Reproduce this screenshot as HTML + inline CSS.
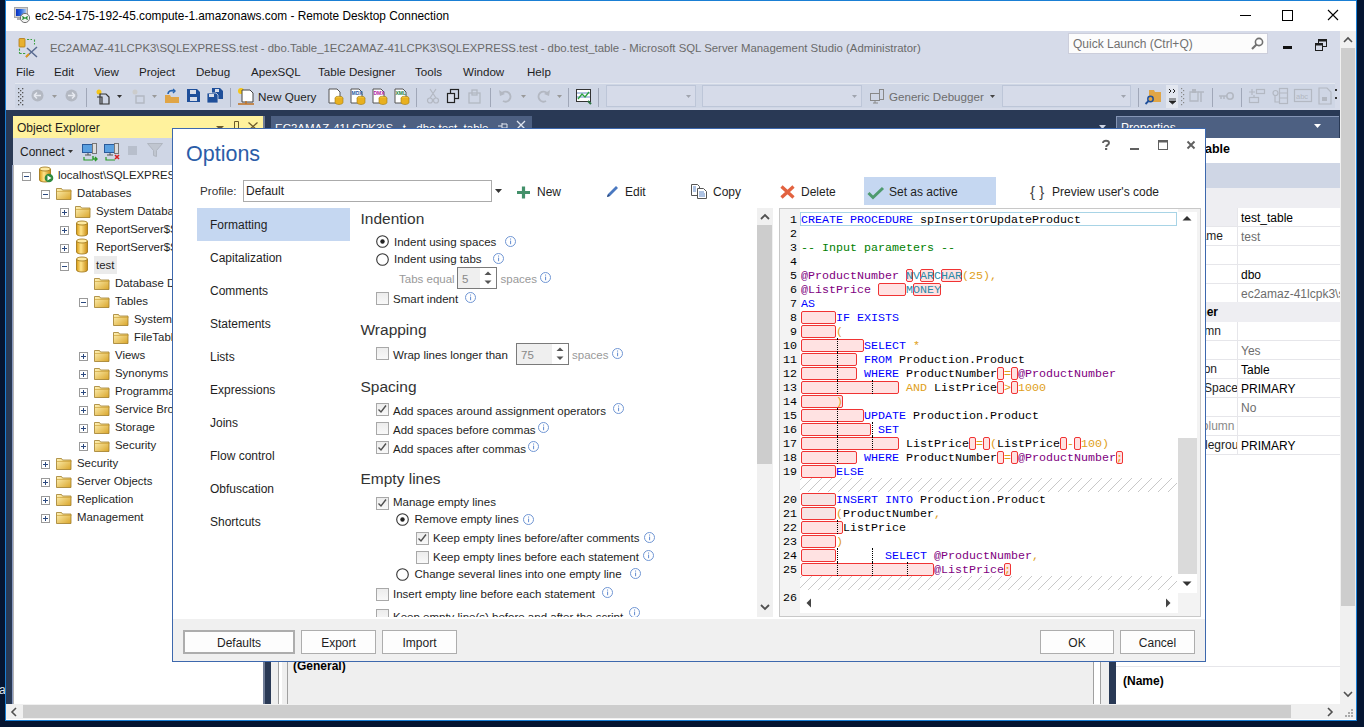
<!DOCTYPE html><html><head><meta charset="utf-8"><style>
*{margin:0;padding:0;box-sizing:border-box}
html,body{width:1364px;height:727px;overflow:hidden;background:#051531;font-family:"Liberation Sans", sans-serif;font-size:12px;color:#1e1e1e}
div{position:absolute}
.t{white-space:pre;line-height:14px}
svg{position:absolute;overflow:visible}
</style></head><body><div style="left:-1px;top:683px;width:6px;height:14px;overflow:hidden"><div class="t" style="left:0;top:0;font-size:12px;color:#e0e8f0">a</div></div><div style="left:5px;top:0px;width:1352px;height:721px;background:#fff;border:1px solid #1a7fd4"></div><div class="t" style="left:35px;top:9px;font-size:11.85px;color:#000">ec2-54-175-192-45.compute-1.amazonaws.com - Remote Desktop Connection</div><svg style="left:14px;top:7px" width="22" height="16"><defs><linearGradient id="rg" x1="0" x2="1"><stop offset="0" stop-color="#0a2fc0"/><stop offset="0.5" stop-color="#2a6ae0"/><stop offset="1" stop-color="#a8c8f0"/></linearGradient></defs><rect x="0.5" y="0.5" width="13" height="10" fill="#d0d0d0" stroke="#a8a8a8"/><rect x="2" y="2" width="10" height="7" fill="url(#rg)"/><rect x="3" y="11" width="6" height="2" fill="#b0b0b0"/><circle cx="11" cy="11" r="4.6" fill="#f4f4f4" stroke="#707070" stroke-width="1"/><path d="M8.3 9.5l2 1.5-2 1.5M13.7 9.5l-2 1.5 2 1.5" stroke="#1a8a2a" stroke-width="1.3" fill="none"/></svg><svg style="left:1240px;top:8px" width="100" height="16"><path d="M0 7.5h11" stroke="#000" stroke-width="1"/><rect x="42.5" y="2.5" width="10" height="10" fill="none" stroke="#000"/><path d="M88 2l10 10M98 2l-10 10" stroke="#000" stroke-width="1.1"/></svg><div style="left:6px;top:31px;width:1334px;height:79px;background:#d6dbe9"></div><svg style="left:18px;top:37px" width="22" height="22"><rect x="1" y="1.5" width="6" height="8.5" rx="0.8" fill="#e8b030" stroke="#b07818" stroke-width="0.8"/><path d="M9 2.5h5M16.5 2.5v5M1.5 11.5v5M1.5 16.5h6" stroke="#3aa040" stroke-width="1.1" fill="none" stroke-dasharray="2.2 1.3"/><path d="M8 20l11-10M9 11l10 9" stroke="#586a90" stroke-width="1.5"/><path d="M8 20l3-3" stroke="#e09a20" stroke-width="2"/></svg><div class="t" style="left:50px;top:41px;font-size:11.4px;color:#6a6a6a">EC2AMAZ-41LCPK3\SQLEXPRESS.test - dbo.Table_1EC2AMAZ-41LCPK3\SQLEXPRESS.test - dbo.test_table - Microsoft SQL Server Management Studio (Administrator)</div><div style="left:1068px;top:33px;width:200px;height:21px;background:#fcfcfc;border:1px solid #cccedb"></div><div class="t" style="left:1073px;top:37px;font-size:12px;color:#717171">Quick Launch (Ctrl+Q)</div><svg style="left:1250px;top:37px" width="16" height="14"><circle cx="9" cy="5" r="3.6" fill="none" stroke="#717171" stroke-width="1.6"/><path d="M6.5 7.5L2 12" stroke="#717171" stroke-width="2.2"/></svg><div style="left:1283px;top:46px;width:9px;height:3px;background:#111"></div><svg style="left:1315px;top:39px" width="12" height="12"><rect x="3.5" y="0.5" width="8" height="7" fill="none" stroke="#1e1e1e"/><rect x="3.5" y="0.5" width="8" height="2" fill="#1e1e1e"/><rect x="0.5" y="4.5" width="7" height="7" fill="#d6dbe9" stroke="#1e1e1e"/><rect x="0.5" y="4.5" width="7" height="2" fill="#1e1e1e"/></svg><div class="t" style="left:16px;top:65px;font-size:11.6px;color:#1e1e1e">File</div><div class="t" style="left:54px;top:65px;font-size:11.6px;color:#1e1e1e">Edit</div><div class="t" style="left:94px;top:65px;font-size:11.6px;color:#1e1e1e">View</div><div class="t" style="left:139px;top:65px;font-size:11.6px;color:#1e1e1e">Project</div><div class="t" style="left:196px;top:65px;font-size:11.6px;color:#1e1e1e">Debug</div><div class="t" style="left:251px;top:65px;font-size:11.6px;color:#1e1e1e">ApexSQL</div><div class="t" style="left:318px;top:65px;font-size:11.6px;color:#1e1e1e">Table Designer</div><div class="t" style="left:415px;top:65px;font-size:11.6px;color:#1e1e1e">Tools</div><div class="t" style="left:463px;top:65px;font-size:11.6px;color:#1e1e1e">Window</div><div class="t" style="left:527px;top:65px;font-size:11.6px;color:#1e1e1e">Help</div><div style="left:15px;top:83px;width:1320px;height:25px;background:#cfd6e5;border-top:1px solid #e4e8f0"></div><svg style="left:17px;top:87px" width="8" height="20"><rect x="1" y="1" width="1.3" height="1.3" fill="#555"/><rect x="3" y="3" width="1.3" height="1.3" fill="#555"/><rect x="1" y="5" width="1.3" height="1.3" fill="#555"/><rect x="3" y="7" width="1.3" height="1.3" fill="#555"/><rect x="1" y="9" width="1.3" height="1.3" fill="#555"/><rect x="3" y="11" width="1.3" height="1.3" fill="#555"/><rect x="1" y="13" width="1.3" height="1.3" fill="#555"/><rect x="3" y="15" width="1.3" height="1.3" fill="#555"/><rect x="1" y="17" width="1.3" height="1.3" fill="#555"/><rect x="5" y="1" width="1.3" height="1.3" fill="#555"/><rect x="5" y="5" width="1.3" height="1.3" fill="#555"/><rect x="5" y="9" width="1.3" height="1.3" fill="#555"/><rect x="5" y="13" width="1.3" height="1.3" fill="#555"/><rect x="5" y="17" width="1.3" height="1.3" fill="#555"/></svg><svg style="left:31px;top:89px" width="14" height="14"><circle cx="6.5" cy="6.5" r="6" fill="#b3b8c2"/><path d="M3 6.5h7M3 6.5l3-3M3 6.5l3 3" stroke="#e6e9f0" stroke-width="1.6" fill="none"/></svg><svg style="left:52px;top:95px" width="6" height="4"><path d="M0 0h5l-2.5 3z" fill="#999"/></svg><svg style="left:65px;top:89px" width="14" height="14"><circle cx="6.5" cy="6.5" r="6" fill="#b3b8c2"/><path d="M3 6.5h7M10 6.5l-3-3M10 6.5l-3 3" stroke="#e6e9f0" stroke-width="1.6" fill="none"/></svg><div style="left:86px;top:88px;width:1px;height:19px;background:#a0a7b8"></div><svg style="left:95px;top:88px" width="16" height="17"><circle cx="4" cy="4" r="2.5" fill="#f5c518"/><path d="M5 6h6l3 3v7H5z" fill="none" stroke="#333" stroke-width="1.2"/><path d="M2 9h5v7" fill="none" stroke="#333" stroke-width="1.2"/></svg><svg style="left:117px;top:95px" width="6" height="4"><path d="M0 0h5l-2.5 3z" fill="#333"/></svg><svg style="left:131px;top:88px" width="16" height="17"><circle cx="4" cy="4" r="2.5" fill="#ccc"/><path d="M5 8h8v7H5z" fill="none" stroke="#b3b8c2" stroke-width="1.4"/></svg><svg style="left:152px;top:95px" width="6" height="4"><path d="M0 0h5l-2.5 3z" fill="#999"/></svg><svg style="left:164px;top:88px" width="16" height="16"><path d="M1 7h5l1 2h8v6H1z" fill="#e0a546"/><path d="M4 6c0-3 3-4 6-3" stroke="#2563b0" stroke-width="1.6" fill="none"/><path d="M9 1l2 2-2 2" stroke="#2563b0" stroke-width="1.4" fill="none"/></svg><svg style="left:187px;top:89px" width="13" height="13"><path d="M0 0h10l3 3v10H0z" fill="#1f4f9a"/><rect x="3" y="1" width="6" height="4" fill="#d8dde9"/><rect x="3" y="8" width="7" height="4" fill="#d8dde9"/></svg><svg style="left:207px;top:88px" width="16" height="15"><path d="M5 0h8l3 3v8H5z" fill="#1f4f9a"/><rect x="8" y="1" width="4" height="3" fill="#d8dde9"/><path d="M0 5h9l2 2v8H0z" fill="#1f4f9a" stroke="#d8dde9" stroke-width="0.8"/><rect x="2" y="6" width="5" height="3" fill="#d8dde9"/></svg><div style="left:230px;top:88px;width:1px;height:19px;background:#a0a7b8"></div><svg style="left:237px;top:87px" width="18" height="19"><circle cx="4" cy="4" r="3" fill="#f5c518"/><path d="M5 3h8l3 3v9H5z" fill="#fff" stroke="#444" stroke-width="1"/><path d="M1 17h16M9 14v3" stroke="#c07020" stroke-width="1.4"/></svg><div class="t" style="left:258px;top:90px;font-size:11.7px;color:#1e1e1e">New Query</div><svg style="left:328px;top:88px" width="16" height="17"><path d="M1 1h8l3 3v11H1z" fill="#fff" stroke="#555" stroke-width="1"/><text x="1.5" y="7" font-size="5" font-family="Liberation Sans" fill="#000" font-weight="bold"></text><ellipse cx="11" cy="10" rx="4" ry="1.8" fill="#f0c030" stroke="#a07810" stroke-width="0.6"/><path d="M7 10v4.5c0 1 2 2 4 2s4-1 4-2V10" fill="#e8b020" stroke="#a07810" stroke-width="0.6"/></svg></svg><svg style="left:350px;top:88px" width="16" height="17"><path d="M1 1h8l3 3v11H1z" fill="#fff" stroke="#555" stroke-width="1"/><text x="1.5" y="7" font-size="5" font-family="Liberation Sans" fill="#2a5aa0" font-weight="bold">MDX</text><ellipse cx="11" cy="10" rx="4" ry="1.8" fill="#f0c030" stroke="#a07810" stroke-width="0.6"/><path d="M7 10v4.5c0 1 2 2 4 2s4-1 4-2V10" fill="#e8b020" stroke="#a07810" stroke-width="0.6"/></svg></svg><svg style="left:372px;top:88px" width="16" height="17"><path d="M1 1h8l3 3v11H1z" fill="#fff" stroke="#555" stroke-width="1"/><text x="1.5" y="7" font-size="5" font-family="Liberation Sans" fill="#b020a0" font-weight="bold">DMX</text><ellipse cx="11" cy="10" rx="4" ry="1.8" fill="#f0c030" stroke="#a07810" stroke-width="0.6"/><path d="M7 10v4.5c0 1 2 2 4 2s4-1 4-2V10" fill="#e8b020" stroke="#a07810" stroke-width="0.6"/></svg></svg><svg style="left:394px;top:88px" width="16" height="17"><path d="M1 1h8l3 3v11H1z" fill="#fff" stroke="#555" stroke-width="1"/><text x="1.5" y="7" font-size="5" font-family="Liberation Sans" fill="#208040" font-weight="bold">XML</text><ellipse cx="11" cy="10" rx="4" ry="1.8" fill="#f0c030" stroke="#a07810" stroke-width="0.6"/><path d="M7 10v4.5c0 1 2 2 4 2s4-1 4-2V10" fill="#e8b020" stroke="#a07810" stroke-width="0.6"/></svg></svg><div style="left:416px;top:88px;width:1px;height:19px;background:#a0a7b8"></div><svg style="left:427px;top:88px" width="12" height="16"><path d="M3 1l6 9M9 1l-6 9" stroke="#b3b8c2" stroke-width="1.2"/><circle cx="3" cy="12.5" r="2.5" fill="none" stroke="#b3b8c2" stroke-width="1.2"/><circle cx="9" cy="12.5" r="2.5" fill="none" stroke="#b3b8c2" stroke-width="1.2"/></svg><svg style="left:447px;top:89px" width="12" height="14"><rect x="3.5" y="0.5" width="8" height="9" fill="none" stroke="#222" stroke-width="1.2"/><rect x="0.5" y="4.5" width="7" height="9" fill="#d8dde9" stroke="#222" stroke-width="1.2"/></svg><svg style="left:468px;top:88px" width="13" height="16"><rect x="1" y="5" width="11" height="10" fill="none" stroke="#b3b8c2" stroke-width="1.3"/><rect x="4" y="2" width="5" height="5" fill="none" stroke="#b3b8c2" stroke-width="1.3"/></svg><div style="left:490px;top:88px;width:1px;height:19px;background:#a0a7b8"></div><svg style="left:499px;top:89px" width="14" height="14"><path d="M3 4a5 5 0 1 1 1 8" stroke="#b3b8c2" stroke-width="2" fill="none"/><path d="M0 1l1 6 5-2z" fill="#b3b8c2"/></svg><svg style="left:521px;top:95px" width="6" height="4"><path d="M0 0h5l-2.5 3z" fill="#999"/></svg><svg style="left:536px;top:89px" width="14" height="14"><path d="M11 4a5 5 0 1 0 -1 8" stroke="#b3b8c2" stroke-width="2" fill="none"/><path d="M14 1l-1 6-5-2z" fill="#b3b8c2"/></svg><svg style="left:557px;top:95px" width="6" height="4"><path d="M0 0h5l-2.5 3z" fill="#999"/></svg><div style="left:568px;top:88px;width:1px;height:19px;background:#a0a7b8"></div><svg style="left:576px;top:88px" width="17" height="16"><rect x="0.5" y="1.5" width="14" height="12" fill="#fff" stroke="#333"/><path d="M1 5h13M1 9h13" stroke="#6a8cc8"/><path d="M2 11l4-5 3 3 4-5" stroke="#2aa040" stroke-width="1.3" fill="none"/><path d="M12 13l3 3" stroke="#2a7040" stroke-width="2"/></svg><div style="left:598px;top:88px;width:1px;height:19px;background:#a0a7b8"></div><div style="left:606px;top:85px;width:90px;height:22px;background:#d6dbe9;border:1px solid #bdc6d8"></div><svg style="left:686px;top:95px" width="6" height="4"><path d="M0 0h5l-2.5 3z" fill="#a0a4ae"/></svg><div style="left:702px;top:85px;width:160px;height:22px;background:#d6dbe9;border:1px solid #bdc6d8"></div><svg style="left:852px;top:95px" width="6" height="4"><path d="M0 0h5l-2.5 3z" fill="#a0a4ae"/></svg><svg style="left:870px;top:88px" width="14" height="16"><rect x="0.5" y="5.5" width="9" height="7" fill="none" stroke="#888"/><path d="M3 15h5M5 13v2" stroke="#888"/><rect x="9.5" y="1.5" width="4" height="10" fill="none" stroke="#888"/></svg><div class="t" style="left:889px;top:90px;font-size:11.6px;color:#6d6d6d">Generic Debugger</div><svg style="left:990px;top:95px" width="6" height="4"><path d="M0 0h5l-2.5 3z" fill="#444"/></svg><div style="left:1002px;top:85px;width:129px;height:22px;background:#d6dbe9;border:1px solid #bdc6d8"></div><svg style="left:1121px;top:95px" width="6" height="4"><path d="M0 0h5l-2.5 3z" fill="#a0a4ae"/></svg><div style="left:1138px;top:88px;width:1px;height:19px;background:#a0a7b8"></div><svg style="left:1145px;top:87px" width="17" height="18"><path d="M4 3h5l1 2h6v10H4z" fill="#e0a546"/><circle cx="5.5" cy="12" r="2.7" fill="none" stroke="#1f4f9a" stroke-width="1.5"/><path d="M3.5 14l-3 3" stroke="#1f4f9a" stroke-width="1.8"/></svg><div style="left:1166px;top:85px;width:12px;height:23px;background:#e2e6ef"></div><svg style="left:1168px;top:88px" width="9" height="18"><path d="M1 1l2 2-2 2M5 1l2 2-2 2" stroke="#222" fill="none" stroke-width="1"/><path d="M1 11h7M1 13l3.5 3 3.5-3z" fill="#222" stroke="#222" stroke-width="0.8"/></svg><svg style="left:1180px;top:87px" width="6" height="20"><rect x="1" y="1" width="1.2" height="1.2" fill="#888"/><rect x="3" y="3" width="1.2" height="1.2" fill="#888"/><rect x="1" y="5" width="1.2" height="1.2" fill="#888"/><rect x="3" y="7" width="1.2" height="1.2" fill="#888"/><rect x="1" y="9" width="1.2" height="1.2" fill="#888"/><rect x="3" y="11" width="1.2" height="1.2" fill="#888"/><rect x="1" y="13" width="1.2" height="1.2" fill="#888"/><rect x="3" y="15" width="1.2" height="1.2" fill="#888"/><rect x="1" y="17" width="1.2" height="1.2" fill="#888"/></svg><svg style="left:1189px;top:88px" width="16" height="16"><path d="M1 4h8v9H1z" fill="none" stroke="#b3b8c2" stroke-width="1.3"/><path d="M3 1h4v4H3z" fill="#b3b8c2"/><path d="M9 4h6M12 4v10" stroke="#b3b8c2" stroke-width="1.5"/></svg><div style="left:1212px;top:88px;width:1px;height:19px;background:#a0a7b8"></div><svg style="left:1219px;top:92px" width="16" height="9"><circle cx="11" cy="4" r="3.2" fill="none" stroke="#b3b8c2" stroke-width="1.6"/><path d="M0 4h8M2 4v3M5 4v3" stroke="#b3b8c2" stroke-width="1.5"/></svg><div style="left:1241px;top:88px;width:1px;height:19px;background:#a0a7b8"></div><svg style="left:1249px;top:88px" width="16" height="16"><rect x="7.5" y="1.5" width="8" height="4" fill="none" stroke="#b3b8c2" stroke-width="1.2"/><rect x="0.5" y="9.5" width="9" height="5" fill="none" stroke="#b3b8c2" stroke-width="1.2"/><path d="M3 1v6M0 4h6M5 7v3" stroke="#b3b8c2" stroke-width="1.2"/></svg><svg style="left:1272px;top:88px" width="16" height="16"><circle cx="3.5" cy="5" r="2.5" fill="none" stroke="#b3b8c2" stroke-width="1.2"/><rect x="7.5" y="0.5" width="8" height="15" fill="none" stroke="#b3b8c2" stroke-width="1.2"/><path d="M8 5h7M8 10h7M3 8v6h4" stroke="#b3b8c2" stroke-width="1.2" fill="none"/></svg><svg style="left:1294px;top:89px" width="18" height="13"><rect x="0.5" y="0.5" width="17" height="12" fill="none" stroke="#b3b8c2" stroke-width="1.2"/><text x="2" y="9.5" font-size="7.5" font-family="Liberation Sans" fill="#b3b8c2">abc</text></svg><svg style="left:1318px;top:87px" width="14" height="18"><path d="M1 1h8l4 4v12H1z" fill="none" stroke="#b3b8c2" stroke-width="1.2"/><rect x="4" y="10" width="5" height="4" fill="#b3b8c2"/></svg><svg style="left:1335px;top:88px" width="3" height="14"><rect x="0" y="1" width="2" height="2" fill="#333"/><rect x="0" y="9" width="2" height="2" fill="#333"/></svg><div style="left:6px;top:110px;width:1334px;height:594px;background:#293955"></div><div style="left:13px;top:116px;width:252px;height:22px;background:#fff29d"></div><div class="t" style="left:17px;top:121px;font-size:12px;color:#1e1e1e">Object Explorer</div><svg style="left:216px;top:126px" width="8" height="5"><path d="M0 0h8l-4 4z" fill="#6b5a2a"/></svg><svg style="left:233px;top:121px" width="8" height="10"><path d="M1.5 0.5h4v7h-4zM0 7.5h7M3.5 8v3" stroke="#6b5a2a" stroke-width="1" fill="none"/></svg><svg style="left:248px;top:122px" width="10" height="9"><path d="M0.5 0.5l9 8M9.5 0.5l-9 8" stroke="#6b5a2a" stroke-width="1.2"/></svg><div style="left:13px;top:138px;width:252px;height:27px;background:#cfd6e5"></div><div class="t" style="left:20px;top:145px;font-size:12px;color:#1e1e1e">Connect</div><svg style="left:68px;top:150px" width="6" height="4"><path d="M0 0h5l-2.5 3z" fill="#333"/></svg><svg style="left:82px;top:143px" width="17" height="18"><rect x="0.5" y="1.5" width="10" height="8" fill="#5aa0e0" stroke="#2a5a9a"/><rect x="10.5" y="0.5" width="4" height="10" fill="#ddd" stroke="#777"/><path d="M3 12h6M6 10v2" stroke="#555"/><path d="M2 14v3h9" stroke="#2a9a2a" stroke-width="1.2" fill="none"/><path d="M11 13v3h4M13 14l2 2-2 2" stroke="#2a9a2a" stroke-width="1.4" fill="none"/></svg><svg style="left:104px;top:143px" width="17" height="18"><rect x="0.5" y="1.5" width="10" height="8" fill="#5aa0e0" stroke="#2a5a9a"/><rect x="10.5" y="0.5" width="4" height="10" fill="#ddd" stroke="#777"/><path d="M3 12h6M6 10v2" stroke="#555"/><path d="M2 14v3h9" stroke="#2a9a2a" stroke-width="1.2" fill="none"/><path d="M11 12l4 4M15 12l-4 4" stroke="#d82020" stroke-width="1.6"/></svg><div style="left:128px;top:146px;width:9px;height:9px;background:#b8bfcc"></div><svg style="left:147px;top:143px" width="17" height="14"><path d="M0.5 0.5h15l-6 7v6l-3-1v-5z" fill="#c0c6d0" stroke="#b0b6c0"/></svg><div style="left:12px;top:165px;width:251px;height:539px;background:#fff;border-left:1px solid #8a9abf"></div><div style="left:13px;top:165px;width:1px;height:539px;background:#b4b4b4"></div><div style="left:263px;top:116px;width:2px;height:588px;background:#6f7c96"></div><div style="left:265px;top:116px;width:6px;height:588px;background:#293955"></div><svg style="left:22px;top:172px" width="9" height="9"><rect x="0.5" y="0.5" width="8" height="8" fill="#fff" stroke="#9a9a9a"/><path d="M2 4.5h5" stroke="#2c4a80" stroke-width="1"/></svg><svg style="left:38px;top:166px" width="16" height="17"><defs><linearGradient id="dg" x1="0" x2="1"><stop offset="0" stop-color="#d99a10"/><stop offset="0.4" stop-color="#ffe48a"/><stop offset="1" stop-color="#c88a10"/></linearGradient></defs><path d="M1.5 3v11c0 1.2 2.5 2 5.5 2s5.5-.8 5.5-2V3" fill="url(#dg)" stroke="#9a7010" stroke-width="0.8"/><ellipse cx="7" cy="3" rx="5.5" ry="2" fill="#ffeaa0" stroke="#9a7010" stroke-width="0.8"/><circle cx="11" cy="12" r="4.3" fill="#2e8b3e"/><path d="M9.5 9.5v5l4-2.5z" fill="#fff"/></svg><div class="t" style="left:58px;top:168px;font-size:11.4px;color:#1e1e1e">localhost\SQLEXPRESS</div><svg style="left:41px;top:190px" width="9" height="9"><rect x="0.5" y="0.5" width="8" height="8" fill="#fff" stroke="#9a9a9a"/><path d="M2 4.5h5" stroke="#2c4a80" stroke-width="1"/></svg><svg style="left:56px;top:186px" width="16" height="14"><defs><linearGradient id="fg" x1="0" y1="0" x2="1" y2="1"><stop offset="0" stop-color="#fff3b8"/><stop offset="1" stop-color="#d9a52a"/></linearGradient></defs><path d="M0.5 2.5h5l1 1.5h8.5v9.5h-14.5z" fill="url(#fg)" stroke="#a07c28" stroke-width="0.8"/><path d="M0.5 5.5h15" stroke="#c89a30" stroke-width="0.6"/></svg><div class="t" style="left:77px;top:186px;font-size:11.4px;color:#1e1e1e">Databases</div><svg style="left:60px;top:208px" width="9" height="9"><rect x="0.5" y="0.5" width="8" height="8" fill="#fff" stroke="#9a9a9a"/><path d="M2 4.5h5" stroke="#2c4a80" stroke-width="1"/><path d="M4.5 2v5" stroke="#2c4a80" stroke-width="1"/></svg><svg style="left:75px;top:204px" width="16" height="14"><defs><linearGradient id="fg" x1="0" y1="0" x2="1" y2="1"><stop offset="0" stop-color="#fff3b8"/><stop offset="1" stop-color="#d9a52a"/></linearGradient></defs><path d="M0.5 2.5h5l1 1.5h8.5v9.5h-14.5z" fill="url(#fg)" stroke="#a07c28" stroke-width="0.8"/><path d="M0.5 5.5h15" stroke="#c89a30" stroke-width="0.6"/></svg><div class="t" style="left:96px;top:204px;font-size:11.4px;color:#1e1e1e">System Databases</div><svg style="left:60px;top:226px" width="9" height="9"><rect x="0.5" y="0.5" width="8" height="8" fill="#fff" stroke="#9a9a9a"/><path d="M2 4.5h5" stroke="#2c4a80" stroke-width="1"/><path d="M4.5 2v5" stroke="#2c4a80" stroke-width="1"/></svg><svg style="left:75px;top:220px" width="16" height="17"><defs><linearGradient id="dg" x1="0" x2="1"><stop offset="0" stop-color="#d99a10"/><stop offset="0.4" stop-color="#ffe48a"/><stop offset="1" stop-color="#c88a10"/></linearGradient></defs><path d="M1.5 3v11c0 1.2 2.5 2 5.5 2s5.5-.8 5.5-2V3" fill="url(#dg)" stroke="#9a7010" stroke-width="0.8"/><ellipse cx="7" cy="3" rx="5.5" ry="2" fill="#ffeaa0" stroke="#9a7010" stroke-width="0.8"/></svg><div class="t" style="left:96px;top:222px;font-size:11.4px;color:#1e1e1e">ReportServer$SQLEXPRESS</div><svg style="left:60px;top:244px" width="9" height="9"><rect x="0.5" y="0.5" width="8" height="8" fill="#fff" stroke="#9a9a9a"/><path d="M2 4.5h5" stroke="#2c4a80" stroke-width="1"/><path d="M4.5 2v5" stroke="#2c4a80" stroke-width="1"/></svg><svg style="left:75px;top:238px" width="16" height="17"><defs><linearGradient id="dg" x1="0" x2="1"><stop offset="0" stop-color="#d99a10"/><stop offset="0.4" stop-color="#ffe48a"/><stop offset="1" stop-color="#c88a10"/></linearGradient></defs><path d="M1.5 3v11c0 1.2 2.5 2 5.5 2s5.5-.8 5.5-2V3" fill="url(#dg)" stroke="#9a7010" stroke-width="0.8"/><ellipse cx="7" cy="3" rx="5.5" ry="2" fill="#ffeaa0" stroke="#9a7010" stroke-width="0.8"/></svg><div class="t" style="left:96px;top:240px;font-size:11.4px;color:#1e1e1e">ReportServer$SQLEXPRESSTempDB</div><svg style="left:60px;top:262px" width="9" height="9"><rect x="0.5" y="0.5" width="8" height="8" fill="#fff" stroke="#9a9a9a"/><path d="M2 4.5h5" stroke="#2c4a80" stroke-width="1"/></svg><svg style="left:75px;top:256px" width="16" height="17"><defs><linearGradient id="dg" x1="0" x2="1"><stop offset="0" stop-color="#d99a10"/><stop offset="0.4" stop-color="#ffe48a"/><stop offset="1" stop-color="#c88a10"/></linearGradient></defs><path d="M1.5 3v11c0 1.2 2.5 2 5.5 2s5.5-.8 5.5-2V3" fill="url(#dg)" stroke="#9a7010" stroke-width="0.8"/><ellipse cx="7" cy="3" rx="5.5" ry="2" fill="#ffeaa0" stroke="#9a7010" stroke-width="0.8"/></svg><div style="left:94px;top:256px;width:23px;height:18px;background:#ebebeb"></div><div class="t" style="left:96px;top:258px;font-size:11.4px;color:#1e1e1e">test</div><svg style="left:94px;top:276px" width="16" height="14"><defs><linearGradient id="fg" x1="0" y1="0" x2="1" y2="1"><stop offset="0" stop-color="#fff3b8"/><stop offset="1" stop-color="#d9a52a"/></linearGradient></defs><path d="M0.5 2.5h5l1 1.5h8.5v9.5h-14.5z" fill="url(#fg)" stroke="#a07c28" stroke-width="0.8"/><path d="M0.5 5.5h15" stroke="#c89a30" stroke-width="0.6"/></svg><div class="t" style="left:115px;top:276px;font-size:11.4px;color:#1e1e1e">Database Diagrams</div><svg style="left:79px;top:298px" width="9" height="9"><rect x="0.5" y="0.5" width="8" height="8" fill="#fff" stroke="#9a9a9a"/><path d="M2 4.5h5" stroke="#2c4a80" stroke-width="1"/></svg><svg style="left:94px;top:294px" width="16" height="14"><defs><linearGradient id="fg" x1="0" y1="0" x2="1" y2="1"><stop offset="0" stop-color="#fff3b8"/><stop offset="1" stop-color="#d9a52a"/></linearGradient></defs><path d="M0.5 2.5h5l1 1.5h8.5v9.5h-14.5z" fill="url(#fg)" stroke="#a07c28" stroke-width="0.8"/><path d="M0.5 5.5h15" stroke="#c89a30" stroke-width="0.6"/></svg><div class="t" style="left:115px;top:294px;font-size:11.4px;color:#1e1e1e">Tables</div><svg style="left:113px;top:312px" width="16" height="14"><defs><linearGradient id="fg" x1="0" y1="0" x2="1" y2="1"><stop offset="0" stop-color="#fff3b8"/><stop offset="1" stop-color="#d9a52a"/></linearGradient></defs><path d="M0.5 2.5h5l1 1.5h8.5v9.5h-14.5z" fill="url(#fg)" stroke="#a07c28" stroke-width="0.8"/><path d="M0.5 5.5h15" stroke="#c89a30" stroke-width="0.6"/></svg><div class="t" style="left:134px;top:312px;font-size:11.4px;color:#1e1e1e">System Tables</div><svg style="left:113px;top:330px" width="16" height="14"><defs><linearGradient id="fg" x1="0" y1="0" x2="1" y2="1"><stop offset="0" stop-color="#fff3b8"/><stop offset="1" stop-color="#d9a52a"/></linearGradient></defs><path d="M0.5 2.5h5l1 1.5h8.5v9.5h-14.5z" fill="url(#fg)" stroke="#a07c28" stroke-width="0.8"/><path d="M0.5 5.5h15" stroke="#c89a30" stroke-width="0.6"/></svg><div class="t" style="left:134px;top:330px;font-size:11.4px;color:#1e1e1e">FileTables</div><svg style="left:79px;top:352px" width="9" height="9"><rect x="0.5" y="0.5" width="8" height="8" fill="#fff" stroke="#9a9a9a"/><path d="M2 4.5h5" stroke="#2c4a80" stroke-width="1"/><path d="M4.5 2v5" stroke="#2c4a80" stroke-width="1"/></svg><svg style="left:94px;top:348px" width="16" height="14"><defs><linearGradient id="fg" x1="0" y1="0" x2="1" y2="1"><stop offset="0" stop-color="#fff3b8"/><stop offset="1" stop-color="#d9a52a"/></linearGradient></defs><path d="M0.5 2.5h5l1 1.5h8.5v9.5h-14.5z" fill="url(#fg)" stroke="#a07c28" stroke-width="0.8"/><path d="M0.5 5.5h15" stroke="#c89a30" stroke-width="0.6"/></svg><div class="t" style="left:115px;top:348px;font-size:11.4px;color:#1e1e1e">Views</div><svg style="left:79px;top:370px" width="9" height="9"><rect x="0.5" y="0.5" width="8" height="8" fill="#fff" stroke="#9a9a9a"/><path d="M2 4.5h5" stroke="#2c4a80" stroke-width="1"/><path d="M4.5 2v5" stroke="#2c4a80" stroke-width="1"/></svg><svg style="left:94px;top:366px" width="16" height="14"><defs><linearGradient id="fg" x1="0" y1="0" x2="1" y2="1"><stop offset="0" stop-color="#fff3b8"/><stop offset="1" stop-color="#d9a52a"/></linearGradient></defs><path d="M0.5 2.5h5l1 1.5h8.5v9.5h-14.5z" fill="url(#fg)" stroke="#a07c28" stroke-width="0.8"/><path d="M0.5 5.5h15" stroke="#c89a30" stroke-width="0.6"/></svg><div class="t" style="left:115px;top:366px;font-size:11.4px;color:#1e1e1e">Synonyms</div><svg style="left:79px;top:388px" width="9" height="9"><rect x="0.5" y="0.5" width="8" height="8" fill="#fff" stroke="#9a9a9a"/><path d="M2 4.5h5" stroke="#2c4a80" stroke-width="1"/><path d="M4.5 2v5" stroke="#2c4a80" stroke-width="1"/></svg><svg style="left:94px;top:384px" width="16" height="14"><defs><linearGradient id="fg" x1="0" y1="0" x2="1" y2="1"><stop offset="0" stop-color="#fff3b8"/><stop offset="1" stop-color="#d9a52a"/></linearGradient></defs><path d="M0.5 2.5h5l1 1.5h8.5v9.5h-14.5z" fill="url(#fg)" stroke="#a07c28" stroke-width="0.8"/><path d="M0.5 5.5h15" stroke="#c89a30" stroke-width="0.6"/></svg><div class="t" style="left:115px;top:384px;font-size:11.4px;color:#1e1e1e">Programmability</div><svg style="left:79px;top:406px" width="9" height="9"><rect x="0.5" y="0.5" width="8" height="8" fill="#fff" stroke="#9a9a9a"/><path d="M2 4.5h5" stroke="#2c4a80" stroke-width="1"/><path d="M4.5 2v5" stroke="#2c4a80" stroke-width="1"/></svg><svg style="left:94px;top:402px" width="16" height="14"><defs><linearGradient id="fg" x1="0" y1="0" x2="1" y2="1"><stop offset="0" stop-color="#fff3b8"/><stop offset="1" stop-color="#d9a52a"/></linearGradient></defs><path d="M0.5 2.5h5l1 1.5h8.5v9.5h-14.5z" fill="url(#fg)" stroke="#a07c28" stroke-width="0.8"/><path d="M0.5 5.5h15" stroke="#c89a30" stroke-width="0.6"/></svg><div class="t" style="left:115px;top:402px;font-size:11.4px;color:#1e1e1e">Service Broker</div><svg style="left:79px;top:424px" width="9" height="9"><rect x="0.5" y="0.5" width="8" height="8" fill="#fff" stroke="#9a9a9a"/><path d="M2 4.5h5" stroke="#2c4a80" stroke-width="1"/><path d="M4.5 2v5" stroke="#2c4a80" stroke-width="1"/></svg><svg style="left:94px;top:420px" width="16" height="14"><defs><linearGradient id="fg" x1="0" y1="0" x2="1" y2="1"><stop offset="0" stop-color="#fff3b8"/><stop offset="1" stop-color="#d9a52a"/></linearGradient></defs><path d="M0.5 2.5h5l1 1.5h8.5v9.5h-14.5z" fill="url(#fg)" stroke="#a07c28" stroke-width="0.8"/><path d="M0.5 5.5h15" stroke="#c89a30" stroke-width="0.6"/></svg><div class="t" style="left:115px;top:420px;font-size:11.4px;color:#1e1e1e">Storage</div><svg style="left:79px;top:442px" width="9" height="9"><rect x="0.5" y="0.5" width="8" height="8" fill="#fff" stroke="#9a9a9a"/><path d="M2 4.5h5" stroke="#2c4a80" stroke-width="1"/><path d="M4.5 2v5" stroke="#2c4a80" stroke-width="1"/></svg><svg style="left:94px;top:438px" width="16" height="14"><defs><linearGradient id="fg" x1="0" y1="0" x2="1" y2="1"><stop offset="0" stop-color="#fff3b8"/><stop offset="1" stop-color="#d9a52a"/></linearGradient></defs><path d="M0.5 2.5h5l1 1.5h8.5v9.5h-14.5z" fill="url(#fg)" stroke="#a07c28" stroke-width="0.8"/><path d="M0.5 5.5h15" stroke="#c89a30" stroke-width="0.6"/></svg><div class="t" style="left:115px;top:438px;font-size:11.4px;color:#1e1e1e">Security</div><svg style="left:41px;top:460px" width="9" height="9"><rect x="0.5" y="0.5" width="8" height="8" fill="#fff" stroke="#9a9a9a"/><path d="M2 4.5h5" stroke="#2c4a80" stroke-width="1"/><path d="M4.5 2v5" stroke="#2c4a80" stroke-width="1"/></svg><svg style="left:56px;top:456px" width="16" height="14"><defs><linearGradient id="fg" x1="0" y1="0" x2="1" y2="1"><stop offset="0" stop-color="#fff3b8"/><stop offset="1" stop-color="#d9a52a"/></linearGradient></defs><path d="M0.5 2.5h5l1 1.5h8.5v9.5h-14.5z" fill="url(#fg)" stroke="#a07c28" stroke-width="0.8"/><path d="M0.5 5.5h15" stroke="#c89a30" stroke-width="0.6"/></svg><div class="t" style="left:77px;top:456px;font-size:11.4px;color:#1e1e1e">Security</div><svg style="left:41px;top:478px" width="9" height="9"><rect x="0.5" y="0.5" width="8" height="8" fill="#fff" stroke="#9a9a9a"/><path d="M2 4.5h5" stroke="#2c4a80" stroke-width="1"/><path d="M4.5 2v5" stroke="#2c4a80" stroke-width="1"/></svg><svg style="left:56px;top:474px" width="16" height="14"><defs><linearGradient id="fg" x1="0" y1="0" x2="1" y2="1"><stop offset="0" stop-color="#fff3b8"/><stop offset="1" stop-color="#d9a52a"/></linearGradient></defs><path d="M0.5 2.5h5l1 1.5h8.5v9.5h-14.5z" fill="url(#fg)" stroke="#a07c28" stroke-width="0.8"/><path d="M0.5 5.5h15" stroke="#c89a30" stroke-width="0.6"/></svg><div class="t" style="left:77px;top:474px;font-size:11.4px;color:#1e1e1e">Server Objects</div><svg style="left:41px;top:496px" width="9" height="9"><rect x="0.5" y="0.5" width="8" height="8" fill="#fff" stroke="#9a9a9a"/><path d="M2 4.5h5" stroke="#2c4a80" stroke-width="1"/><path d="M4.5 2v5" stroke="#2c4a80" stroke-width="1"/></svg><svg style="left:56px;top:492px" width="16" height="14"><defs><linearGradient id="fg" x1="0" y1="0" x2="1" y2="1"><stop offset="0" stop-color="#fff3b8"/><stop offset="1" stop-color="#d9a52a"/></linearGradient></defs><path d="M0.5 2.5h5l1 1.5h8.5v9.5h-14.5z" fill="url(#fg)" stroke="#a07c28" stroke-width="0.8"/><path d="M0.5 5.5h15" stroke="#c89a30" stroke-width="0.6"/></svg><div class="t" style="left:77px;top:492px;font-size:11.4px;color:#1e1e1e">Replication</div><svg style="left:41px;top:514px" width="9" height="9"><rect x="0.5" y="0.5" width="8" height="8" fill="#fff" stroke="#9a9a9a"/><path d="M2 4.5h5" stroke="#2c4a80" stroke-width="1"/><path d="M4.5 2v5" stroke="#2c4a80" stroke-width="1"/></svg><svg style="left:56px;top:510px" width="16" height="14"><defs><linearGradient id="fg" x1="0" y1="0" x2="1" y2="1"><stop offset="0" stop-color="#fff3b8"/><stop offset="1" stop-color="#d9a52a"/></linearGradient></defs><path d="M0.5 2.5h5l1 1.5h8.5v9.5h-14.5z" fill="url(#fg)" stroke="#a07c28" stroke-width="0.8"/><path d="M0.5 5.5h15" stroke="#c89a30" stroke-width="0.6"/></svg><div class="t" style="left:77px;top:510px;font-size:11.4px;color:#1e1e1e">Management</div><div style="left:271px;top:116px;width:261px;height:22px;background:#4d6082"></div><div class="t" style="left:275px;top:121px;font-size:11.5px;color:#fff">EC2AMAZ-41LCPK3\S...t - dbo.test_table</div><svg style="left:498px;top:122px" width="10" height="8"><path d="M0 4h4M4 1v6M4 2h5v4H4" stroke="#e0e6f0" fill="none"/></svg><svg style="left:516px;top:120px" width="10" height="10"><path d="M1 1l8 8M9 1l-8 8" stroke="#e0e6f0" stroke-width="1.3"/></svg><div style="left:271px;top:138px;width:838px;height:566px;background:#efefef"></div><div style="left:278px;top:138px;width:1px;height:566px;background:#a0a0a0"></div><div style="left:279px;top:138px;width:3px;height:566px;background:#fff"></div><div style="left:287px;top:138px;width:1px;height:566px;background:#a0a0a0"></div><div class="t" style="left:293px;top:659px;font-size:12px;font-weight:bold;color:#000">(General)</div><div style="left:1093px;top:138px;width:1px;height:566px;background:#a0a0a0"></div><div style="left:1094px;top:138px;width:6px;height:566px;background:#fff"></div><div style="left:1100px;top:138px;width:1px;height:566px;background:#a0a0a0"></div><div style="left:1101px;top:138px;width:8px;height:566px;background:#efefef"></div><div style="left:1109px;top:116px;width:7px;height:588px;background:#293955"></div><svg style="left:1099px;top:125px" width="8" height="5"><path d="M0 0h7l-3.5 4z" fill="#cfd6e5"/></svg><div style="left:1116px;top:116px;width:223px;height:22px;background:#4d6082;border-top:1px solid #8595b5;border-left:1px solid #8595b5"></div><div class="t" style="left:1121px;top:121px;font-size:12px;color:#fff">Properties</div><svg style="left:1314px;top:124px" width="8" height="5"><path d="M0 0h7l-3.5 4z" fill="#fff"/></svg><div style="left:1116px;top:138px;width:224px;height:566px;background:#fff"></div><div class="t" style="right:134px;top:142px;font-size:12.5px;font-weight:bold;color:#000">dbo.test_table</div><div style="left:1116px;top:163px;width:224px;height:25px;background:#cfd6e5"></div><div style="left:1116px;top:188px;width:224px;height:20px;background:#eeeef2"></div><div style="left:1116px;top:208px;width:224px;height:248px;overflow:hidden"><div style="left:90px;top:0px;width:31px;height:18px;background:#eeeef2"></div><div style="left:0px;top:18px;width:224px;height:1px;background:#e6e6ea"></div><div style="left:121px;top:0px;width:1px;height:19px;background:#e6e6ea"></div><div class="t" style="left:125px;top:3.34px;font-size:12px;line-height:14px;color:#000">test_table</div><div style="left:90px;top:0px;width:31px;height:18px;overflow:hidden"><div class="t" style="right:37px;top:2px;font-size:12px;color:#1e1e1e">(Name)</div></div><div style="left:0px;top:37px;width:224px;height:1px;background:#e6e6ea"></div><div style="left:121px;top:19px;width:1px;height:19px;background:#e6e6ea"></div><div class="t" style="left:125px;top:22.34px;font-size:12px;line-height:14px;color:#6d6d6d">test</div><div style="left:90px;top:19px;width:31px;height:18px;overflow:hidden"><div class="t" style="right:14px;top:2px;font-size:12px;color:#1e1e1e">Database Name</div></div><div style="left:0px;top:56px;width:224px;height:1px;background:#e6e6ea"></div><div style="left:121px;top:38px;width:1px;height:19px;background:#e6e6ea"></div><div class="t" style="left:125px;top:41.34px;font-size:12px;line-height:14px;color:#000"></div><div style="left:90px;top:38px;width:31px;height:18px;overflow:hidden"><div class="t" style="right:37px;top:2px;font-size:12px;color:#1e1e1e">Description</div></div><div style="left:0px;top:75px;width:224px;height:1px;background:#e6e6ea"></div><div style="left:121px;top:57px;width:1px;height:19px;background:#e6e6ea"></div><div class="t" style="left:125px;top:60.34px;font-size:12px;line-height:14px;color:#000">dbo</div><div style="left:90px;top:57px;width:31px;height:18px;overflow:hidden"><div class="t" style="right:37px;top:2px;font-size:12px;color:#1e1e1e">Schema</div></div><div style="left:0px;top:94px;width:224px;height:1px;background:#e6e6ea"></div><div style="left:121px;top:76px;width:1px;height:19px;background:#e6e6ea"></div><div class="t" style="left:125px;top:79.34px;font-size:12px;line-height:14px;color:#6d6d6d">ec2amaz-41lcpk3\sqlexpress</div><div style="left:90px;top:76px;width:31px;height:18px;overflow:hidden"><div class="t" style="right:37px;top:2px;font-size:12px;color:#1e1e1e">Server Name</div></div><div style="left:0px;top:94px;width:224px;height:20px;background:#eeeef2"></div><div class="t" style="right:122px;top:97px;font-size:12px;font-weight:bold;color:#000">Table Designer</div><div style="left:0px;top:132px;width:224px;height:1px;background:#e6e6ea"></div><div style="left:121px;top:114px;width:1px;height:19px;background:#e6e6ea"></div><div class="t" style="left:125px;top:117.34px;font-size:12px;line-height:14px;color:#000"></div><div style="left:90px;top:114px;width:31px;height:18px;overflow:hidden"><div class="t" style="right:16px;top:2px;font-size:12px;color:#1e1e1e">Identity Column</div></div><div style="left:0px;top:151px;width:224px;height:1px;background:#e6e6ea"></div><div style="left:121px;top:133px;width:1px;height:19px;background:#e6e6ea"></div><div class="t" style="left:125px;top:136.34px;font-size:12px;line-height:14px;color:#6d6d6d">Yes</div><div style="left:90px;top:133px;width:31px;height:18px;overflow:hidden"><div class="t" style="right:37px;top:2px;font-size:12px;color:#1e1e1e">Indexable</div></div><div style="left:0px;top:170px;width:224px;height:1px;background:#e6e6ea"></div><div style="left:121px;top:152px;width:1px;height:19px;background:#e6e6ea"></div><div class="t" style="left:125px;top:155.34px;font-size:12px;line-height:14px;color:#000">Table</div><div style="left:90px;top:152px;width:31px;height:18px;overflow:hidden"><div class="t" style="right:20px;top:2px;font-size:12px;color:#1e1e1e">Lock Escalation</div></div><div style="left:0px;top:189px;width:224px;height:1px;background:#e6e6ea"></div><div style="left:121px;top:171px;width:1px;height:19px;background:#e6e6ea"></div><div class="t" style="left:125px;top:174.34px;font-size:12px;line-height:14px;color:#000">PRIMARY</div><div style="left:90px;top:171px;width:31px;height:18px;overflow:hidden"><div class="t" style="right:-1px;top:2px;font-size:12px;color:#1e1e1e">Regular Data Space</div></div><div style="left:0px;top:208px;width:224px;height:1px;background:#e6e6ea"></div><div style="left:121px;top:190px;width:1px;height:19px;background:#e6e6ea"></div><div class="t" style="left:125px;top:193.34px;font-size:12px;line-height:14px;color:#6d6d6d">No</div><div style="left:90px;top:190px;width:31px;height:18px;overflow:hidden"><div class="t" style="right:37px;top:2px;font-size:12px;color:#1e1e1e">Replicated</div></div><div style="left:0px;top:227px;width:224px;height:1px;background:#e6e6ea"></div><div style="left:121px;top:209px;width:1px;height:19px;background:#e6e6ea"></div><div class="t" style="left:125px;top:212.34px;font-size:12px;line-height:14px;color:#909090"></div><div style="left:90px;top:209px;width:31px;height:18px;overflow:hidden"><div class="t" style="right:2.5px;top:2px;font-size:12px;color:#8a8a8a">Row GUID Column</div></div><div style="left:0px;top:246px;width:224px;height:1px;background:#e6e6ea"></div><div style="left:121px;top:228px;width:1px;height:19px;background:#e6e6ea"></div><div class="t" style="left:125px;top:231.34px;font-size:12px;line-height:14px;color:#000">PRIMARY</div><div style="left:90px;top:228px;width:31px;height:18px;overflow:hidden"><div class="t" style="right:-8px;top:2px;font-size:12px;color:#1e1e1e">Text/Image Filegroup</div></div></div><div style="left:1116px;top:666px;width:224px;height:1px;background:#e6e6ea"></div><div class="t" style="left:1123px;top:674px;font-size:12px;font-weight:bold;color:#000">(Name)</div><div style="left:1340px;top:31px;width:16px;height:673px;background:#f0f0f0"></div><div style="left:1341px;top:48px;width:14px;height:558px;background:#cdcdcd"></div><svg style="left:1343px;top:36px" width="10" height="7"><path d="M1 6l4-4 4 4" stroke="#505050" stroke-width="1.6" fill="none"/></svg><svg style="left:1343px;top:691px" width="10" height="7"><path d="M1 1l4 4 4-4" stroke="#505050" stroke-width="1.6" fill="none"/></svg><div style="left:6px;top:704px;width:1334px;height:15px;background:#f0f0f0"></div><div style="left:23px;top:705px;width:1268px;height:13px;background:#cdcdcd"></div><svg style="left:10px;top:707px" width="7" height="10"><path d="M6 1l-4 4 4 4" stroke="#505050" stroke-width="1.6" fill="none"/></svg><svg style="left:1327px;top:707px" width="7" height="10"><path d="M1 1l4 4-4 4" stroke="#505050" stroke-width="1.6" fill="none"/></svg><div style="left:1340px;top:704px;width:16px;height:15px;background:#f0f0f0"></div><svg style="left:1344px;top:709px" width="10" height="8"><rect x="7" y="0" width="2" height="2" fill="#aaa"/><rect x="4" y="3" width="2" height="2" fill="#aaa"/><rect x="7" y="3" width="2" height="2" fill="#aaa"/><rect x="1" y="6" width="2" height="2" fill="#aaa"/><rect x="4" y="6" width="2" height="2" fill="#aaa"/><rect x="7" y="6" width="2" height="2" fill="#aaa"/></svg><div style="left:172px;top:128px;width:1034px;height:534px;background:#fff;border:1px solid #3d68ad"></div><div class="t" style="left:186px;top:146.55px;font-size:21.5px;line-height:14px;color:#2b5da8">Options</div><svg style="left:1102px;top:140px" width="8" height="10"><path d="M1 3c0-1.8 1.3-2.2 3-2.2S7 1.5 7 3c0 2-2.8 1.8-2.8 4" stroke="#606060" stroke-width="1.9" fill="none"/><rect x="3" y="8" width="2.2" height="2" fill="#606060"/></svg><div style="left:1130px;top:148px;width:9px;height:2px;background:#606060"></div><svg style="left:1158px;top:140px" width="10" height="10"><rect x="0.5" y="0.5" width="9" height="9" fill="none" stroke="#606060" stroke-width="1"/><rect x="0.5" y="0.5" width="9" height="2" fill="#606060"/></svg><svg style="left:1186px;top:140px" width="10" height="10"><path d="M1.5 1.5l7 7M8.5 1.5l-7 7" stroke="#606060" stroke-width="1.9"/></svg><div class="t" style="left:200px;top:183.65px;font-size:11.7px;line-height:14px;color:#333">Profile:</div><div style="left:243px;top:180px;width:249px;height:22px;background:#fff;border:1px solid #ababab"></div><div class="t" style="left:246px;top:183.54px;font-size:12px;line-height:14px;color:#1e1e1e">Default</div><svg style="left:495px;top:189px" width="8" height="5"><path d="M0 0h7l-3.5 4z" fill="#333"/></svg><svg style="left:516px;top:186px" width="15" height="13"><path d="M7.5 0.5v12M1 6.5h13" stroke="#43906a" stroke-width="3.2"/></svg><div class="t" style="left:537px;top:184.64px;font-size:12px;line-height:14px;color:#1e1e1e">New</div><svg style="left:605px;top:185px" width="14" height="14"><path d="M2 12l1-3 8-8 2 2-8 8z" fill="#4a78c0"/><path d="M2 12l1-3 2 2z" fill="#2a4a80"/></svg><div class="t" style="left:625px;top:184.64px;font-size:12px;line-height:14px;color:#1e1e1e">Edit</div><svg style="left:691px;top:184px" width="17" height="15"><path d="M0.5 0.5h6l2 2v9h-8z" fill="#fff" stroke="#555"/><path d="M6.5 4.5h6l3 3v7h-9z" fill="#fff" stroke="#555"/><path d="M2 3h3M2 5h3M2 7h3M8 8h5M8 10h6M8 12h6" stroke="#4a78c0" stroke-width="0.9"/></svg><div class="t" style="left:713px;top:184.64px;font-size:12px;line-height:14px;color:#1e1e1e">Copy</div><svg style="left:780px;top:185px" width="15" height="14"><path d="M1.5 1.5l12 11M13.5 1.5l-12 11" stroke="#e2623f" stroke-width="3.3"/></svg><div class="t" style="left:801px;top:184.64px;font-size:12px;line-height:14px;color:#1e1e1e">Delete</div><div style="left:864px;top:177px;width:132px;height:28px;background:#c5d7f1"></div><svg style="left:867px;top:187px" width="18" height="12"><path d="M1.5 6l4.5 4.5L16 1" stroke="#4e9a6e" stroke-width="3" fill="none"/></svg><div class="t" style="left:889px;top:184.64px;font-size:12px;line-height:14px;color:#1e1e1e">Set as active</div><div class="t" style="left:1030px;top:184.80px;font-size:15px;line-height:14px;color:#444">{ }</div><div class="t" style="left:1052px;top:184.64px;font-size:12px;line-height:14px;color:#1e1e1e">Preview user's code</div><div style="left:197px;top:208px;width:153px;height:33px;background:#c5d7f1"></div><div class="t" style="left:210px;top:217.54px;font-size:12px;line-height:14px;color:#1e1e1e">Formatting</div><div class="t" style="left:210px;top:250.54px;font-size:12px;line-height:14px;color:#1e1e1e">Capitalization</div><div class="t" style="left:210px;top:283.54px;font-size:12px;line-height:14px;color:#1e1e1e">Comments</div><div class="t" style="left:210px;top:316.54px;font-size:12px;line-height:14px;color:#1e1e1e">Statements</div><div class="t" style="left:210px;top:349.54px;font-size:12px;line-height:14px;color:#1e1e1e">Lists</div><div class="t" style="left:210px;top:382.54px;font-size:12px;line-height:14px;color:#1e1e1e">Expressions</div><div class="t" style="left:210px;top:415.54px;font-size:12px;line-height:14px;color:#1e1e1e">Joins</div><div class="t" style="left:210px;top:448.54px;font-size:12px;line-height:14px;color:#1e1e1e">Flow control</div><div class="t" style="left:210px;top:481.54px;font-size:12px;line-height:14px;color:#1e1e1e">Obfuscation</div><div class="t" style="left:210px;top:514.54px;font-size:12px;line-height:14px;color:#1e1e1e">Shortcuts</div><div style="left:355px;top:208px;width:402px;height:409px;overflow:hidden"><div class="t" style="left:5.5px;top:4.43px;font-size:15.5px;line-height:14px;color:#333">Indention</div><svg style="left:21px;top:27px" width="13" height="13"><circle cx="6.5" cy="6.5" r="5.8" fill="#fff" stroke="#333" stroke-width="1.1"/><circle cx="6.5" cy="6.5" r="2.2" fill="#222"/></svg><div class="t" style="left:39px;top:26.62px;font-size:11.5px;line-height:14px;color:#1e1e1e">Indent using spaces</div><svg style="left:150px;top:28px" width="12" height="12"><circle cx="5.5" cy="5.5" r="5" fill="none" stroke="#7096d4" stroke-width="1"/><rect x="5" y="2.5" width="1.1" height="1.1" fill="#7096d4"/><rect x="5" y="4.6" width="1.1" height="3.6" fill="#7096d4"/></svg><svg style="left:21px;top:44.5px" width="13" height="13"><circle cx="6.5" cy="6.5" r="5.8" fill="#fff" stroke="#333" stroke-width="1.1"/></svg><div class="t" style="left:39px;top:43.92px;font-size:11.5px;line-height:14px;color:#1e1e1e">Indent using tabs</div><svg style="left:138px;top:45px" width="12" height="12"><circle cx="5.5" cy="5.5" r="5" fill="none" stroke="#7096d4" stroke-width="1"/><rect x="5" y="2.5" width="1.1" height="1.1" fill="#7096d4"/><rect x="5" y="4.6" width="1.1" height="3.6" fill="#7096d4"/></svg><div class="t" style="left:44px;top:63.82px;font-size:11.5px;line-height:14px;color:#999">Tabs equal</div><div style="left:102px;top:59px;width:40px;height:22px;border:1px solid #7a7a7a;background:#fff"></div><div style="left:103px;top:60px;width:22px;height:20px;background:#efefef"></div><div class="t" style="left:107px;top:63.52px;font-size:11.5px;line-height:14px;color:#888">5</div><svg style="left:129px;top:63px" width="8" height="14"><path d="M0.5 4l3.5-3.5 3.5 3.5z" fill="#555"/><path d="M0.5 9.5l3.5 3.5 3.5-3.5z" fill="#555"/></svg><div class="t" style="left:145.5px;top:63.82px;font-size:11.5px;line-height:14px;color:#999">spaces</div><svg style="left:185px;top:64px" width="12" height="12"><circle cx="5.5" cy="5.5" r="5" fill="none" stroke="#7096d4" stroke-width="1"/><rect x="5" y="2.5" width="1.1" height="1.1" fill="#7096d4"/><rect x="5" y="4.6" width="1.1" height="3.6" fill="#7096d4"/></svg><svg style="left:21px;top:84px" width="13" height="13"><defs><linearGradient id="cbg" x1="0" y1="0" x2="0" y2="1"><stop offset="0" stop-color="#ececec"/><stop offset="1" stop-color="#f9f9f9"/></linearGradient></defs><rect x="0.5" y="0.5" width="12" height="12" fill="url(#cbg)" stroke="#a8a8a8"/></svg><div class="t" style="left:38px;top:84.42px;font-size:11.5px;line-height:14px;color:#1e1e1e">Smart indent</div><svg style="left:110px;top:84px" width="12" height="12"><circle cx="5.5" cy="5.5" r="5" fill="none" stroke="#7096d4" stroke-width="1"/><rect x="5" y="2.5" width="1.1" height="1.1" fill="#7096d4"/><rect x="5" y="4.6" width="1.1" height="3.6" fill="#7096d4"/></svg><div class="t" style="left:5.5px;top:114.83px;font-size:15.5px;line-height:14px;color:#333">Wrapping</div><svg style="left:21px;top:139px" width="13" height="13"><defs><linearGradient id="cbg" x1="0" y1="0" x2="0" y2="1"><stop offset="0" stop-color="#ececec"/><stop offset="1" stop-color="#f9f9f9"/></linearGradient></defs><rect x="0.5" y="0.5" width="12" height="12" fill="url(#cbg)" stroke="#a8a8a8"/></svg><div class="t" style="left:38px;top:139.92px;font-size:11.5px;line-height:14px;color:#1e1e1e">Wrap lines longer than</div><div style="left:161px;top:135px;width:53px;height:22px;border:1px solid #7a7a7a;background:#fff"></div><div style="left:162px;top:136px;width:35px;height:20px;background:#efefef"></div><div class="t" style="left:166px;top:139.52px;font-size:11.5px;line-height:14px;color:#888">75</div><svg style="left:201px;top:139px" width="8" height="14"><path d="M0.5 4l3.5-3.5 3.5 3.5z" fill="#555"/><path d="M0.5 9.5l3.5 3.5 3.5-3.5z" fill="#555"/></svg><div class="t" style="left:217px;top:139.92px;font-size:11.5px;line-height:14px;color:#999">spaces</div><svg style="left:257px;top:140px" width="12" height="12"><circle cx="5.5" cy="5.5" r="5" fill="none" stroke="#7096d4" stroke-width="1"/><rect x="5" y="2.5" width="1.1" height="1.1" fill="#7096d4"/><rect x="5" y="4.6" width="1.1" height="3.6" fill="#7096d4"/></svg><div class="t" style="left:5.5px;top:172.23px;font-size:15.5px;line-height:14px;color:#333">Spacing</div><svg style="left:21px;top:195px" width="13" height="13"><defs><linearGradient id="cbg" x1="0" y1="0" x2="0" y2="1"><stop offset="0" stop-color="#ececec"/><stop offset="1" stop-color="#f9f9f9"/></linearGradient></defs><rect x="0.5" y="0.5" width="12" height="12" fill="url(#cbg)" stroke="#a8a8a8"/><path d="M2.5 6.5l2.5 2.5 5-6.5" stroke="#505050" stroke-width="1.4" fill="none"/></svg><div class="t" style="left:38px;top:196.02px;font-size:11.5px;line-height:14px;color:#1e1e1e">Add spaces around assignment operators</div><svg style="left:258px;top:195px" width="12" height="12"><circle cx="5.5" cy="5.5" r="5" fill="none" stroke="#7096d4" stroke-width="1"/><rect x="5" y="2.5" width="1.1" height="1.1" fill="#7096d4"/><rect x="5" y="4.6" width="1.1" height="3.6" fill="#7096d4"/></svg><svg style="left:21px;top:214px" width="13" height="13"><defs><linearGradient id="cbg" x1="0" y1="0" x2="0" y2="1"><stop offset="0" stop-color="#ececec"/><stop offset="1" stop-color="#f9f9f9"/></linearGradient></defs><rect x="0.5" y="0.5" width="12" height="12" fill="url(#cbg)" stroke="#a8a8a8"/></svg><div class="t" style="left:38px;top:214.92px;font-size:11.5px;line-height:14px;color:#1e1e1e">Add spaces before commas</div><svg style="left:183px;top:214px" width="12" height="12"><circle cx="5.5" cy="5.5" r="5" fill="none" stroke="#7096d4" stroke-width="1"/><rect x="5" y="2.5" width="1.1" height="1.1" fill="#7096d4"/><rect x="5" y="4.6" width="1.1" height="3.6" fill="#7096d4"/></svg><svg style="left:21px;top:233px" width="13" height="13"><defs><linearGradient id="cbg" x1="0" y1="0" x2="0" y2="1"><stop offset="0" stop-color="#ececec"/><stop offset="1" stop-color="#f9f9f9"/></linearGradient></defs><rect x="0.5" y="0.5" width="12" height="12" fill="url(#cbg)" stroke="#a8a8a8"/><path d="M2.5 6.5l2.5 2.5 5-6.5" stroke="#505050" stroke-width="1.4" fill="none"/></svg><div class="t" style="left:38px;top:233.82px;font-size:11.5px;line-height:14px;color:#1e1e1e">Add spaces after commas</div><svg style="left:173px;top:233px" width="12" height="12"><circle cx="5.5" cy="5.5" r="5" fill="none" stroke="#7096d4" stroke-width="1"/><rect x="5" y="2.5" width="1.1" height="1.1" fill="#7096d4"/><rect x="5" y="4.6" width="1.1" height="3.6" fill="#7096d4"/></svg><div class="t" style="left:5.5px;top:263.93px;font-size:15.5px;line-height:14px;color:#333">Empty lines</div><svg style="left:21px;top:289px" width="13" height="13"><defs><linearGradient id="cbg" x1="0" y1="0" x2="0" y2="1"><stop offset="0" stop-color="#ececec"/><stop offset="1" stop-color="#f9f9f9"/></linearGradient></defs><rect x="0.5" y="0.5" width="12" height="12" fill="url(#cbg)" stroke="#a8a8a8"/><path d="M2.5 6.5l2.5 2.5 5-6.5" stroke="#505050" stroke-width="1.4" fill="none"/></svg><div class="t" style="left:38px;top:287.42px;font-size:11.5px;line-height:14px;color:#1e1e1e">Manage empty lines</div><svg style="left:40.5px;top:305px" width="13" height="13"><circle cx="6.5" cy="6.5" r="5.8" fill="#fff" stroke="#333" stroke-width="1.1"/><circle cx="6.5" cy="6.5" r="2.2" fill="#222"/></svg><div class="t" style="left:59.5px;top:304.02px;font-size:11.5px;line-height:14px;color:#1e1e1e">Remove empty lines</div><svg style="left:168px;top:306px" width="12" height="12"><circle cx="5.5" cy="5.5" r="5" fill="none" stroke="#7096d4" stroke-width="1"/><rect x="5" y="2.5" width="1.1" height="1.1" fill="#7096d4"/><rect x="5" y="4.6" width="1.1" height="3.6" fill="#7096d4"/></svg><svg style="left:61px;top:324px" width="13" height="13"><defs><linearGradient id="cbg" x1="0" y1="0" x2="0" y2="1"><stop offset="0" stop-color="#ececec"/><stop offset="1" stop-color="#f9f9f9"/></linearGradient></defs><rect x="0.5" y="0.5" width="12" height="12" fill="url(#cbg)" stroke="#a8a8a8"/><path d="M2.5 6.5l2.5 2.5 5-6.5" stroke="#505050" stroke-width="1.4" fill="none"/></svg><div class="t" style="left:78px;top:323.02px;font-size:11.5px;line-height:14px;color:#1e1e1e">Keep empty lines before/after comments</div><svg style="left:289px;top:324px" width="12" height="12"><circle cx="5.5" cy="5.5" r="5" fill="none" stroke="#7096d4" stroke-width="1"/><rect x="5" y="2.5" width="1.1" height="1.1" fill="#7096d4"/><rect x="5" y="4.6" width="1.1" height="3.6" fill="#7096d4"/></svg><svg style="left:61px;top:342.5px" width="13" height="13"><defs><linearGradient id="cbg" x1="0" y1="0" x2="0" y2="1"><stop offset="0" stop-color="#ececec"/><stop offset="1" stop-color="#f9f9f9"/></linearGradient></defs><rect x="0.5" y="0.5" width="12" height="12" fill="url(#cbg)" stroke="#a8a8a8"/></svg><div class="t" style="left:78px;top:342.02px;font-size:11.5px;line-height:14px;color:#1e1e1e">Keep empty lines before each statement</div><svg style="left:288px;top:342px" width="12" height="12"><circle cx="5.5" cy="5.5" r="5" fill="none" stroke="#7096d4" stroke-width="1"/><rect x="5" y="2.5" width="1.1" height="1.1" fill="#7096d4"/><rect x="5" y="4.6" width="1.1" height="3.6" fill="#7096d4"/></svg><svg style="left:40.5px;top:360px" width="13" height="13"><circle cx="6.5" cy="6.5" r="5.8" fill="#fff" stroke="#333" stroke-width="1.1"/></svg><div class="t" style="left:59.5px;top:359.32px;font-size:11.5px;line-height:14px;color:#1e1e1e">Change several lines into one empty line</div><svg style="left:275px;top:360px" width="12" height="12"><circle cx="5.5" cy="5.5" r="5" fill="none" stroke="#7096d4" stroke-width="1"/><rect x="5" y="2.5" width="1.1" height="1.1" fill="#7096d4"/><rect x="5" y="4.6" width="1.1" height="3.6" fill="#7096d4"/></svg><svg style="left:21px;top:379.5px" width="13" height="13"><defs><linearGradient id="cbg" x1="0" y1="0" x2="0" y2="1"><stop offset="0" stop-color="#ececec"/><stop offset="1" stop-color="#f9f9f9"/></linearGradient></defs><rect x="0.5" y="0.5" width="12" height="12" fill="url(#cbg)" stroke="#a8a8a8"/></svg><div class="t" style="left:38px;top:379.12px;font-size:11.5px;line-height:14px;color:#1e1e1e">Insert empty line before each statement</div><svg style="left:247px;top:379px" width="12" height="12"><circle cx="5.5" cy="5.5" r="5" fill="none" stroke="#7096d4" stroke-width="1"/><rect x="5" y="2.5" width="1.1" height="1.1" fill="#7096d4"/><rect x="5" y="4.6" width="1.1" height="3.6" fill="#7096d4"/></svg><svg style="left:21px;top:401px" width="13" height="13"><defs><linearGradient id="cbg" x1="0" y1="0" x2="0" y2="1"><stop offset="0" stop-color="#ececec"/><stop offset="1" stop-color="#f9f9f9"/></linearGradient></defs><rect x="0.5" y="0.5" width="12" height="12" fill="url(#cbg)" stroke="#a8a8a8"/></svg><div class="t" style="left:38px;top:402.32px;font-size:11.5px;line-height:14px;color:#1e1e1e">Keep empty line(s) before and after the script</div><svg style="left:274px;top:399px" width="12" height="12"><circle cx="5.5" cy="5.5" r="5" fill="none" stroke="#7096d4" stroke-width="1"/><rect x="5" y="2.5" width="1.1" height="1.1" fill="#7096d4"/><rect x="5" y="4.6" width="1.1" height="3.6" fill="#7096d4"/></svg></div><div style="left:757px;top:208px;width:16px;height:409px;background:#f0f0f0"></div><div style="left:757px;top:225px;width:15px;height:239px;background:#cdcdcd"></div><svg style="left:760px;top:213px" width="10" height="7"><path d="M1 6l4-4 4 4" stroke="#505050" stroke-width="1.8" fill="none"/></svg><svg style="left:760px;top:604px" width="10" height="7"><path d="M1 1l4 4 4-4" stroke="#505050" stroke-width="1.8" fill="none"/></svg><div style="left:173px;top:619px;width:1032px;height:42px;background:#f0f0f0"></div><div style="left:183px;top:630px;width:112px;height:24px;background:#fdfdfd;border:2px solid #adadad"></div><div class="t" style="left:183px;top:636.44px;width:112px;text-align:center;font-size:12px;color:#1e1e1e">Defaults</div><div style="left:301px;top:630px;width:75px;height:24px;background:#fdfdfd;border:1px solid #adadad"></div><div class="t" style="left:301px;top:636.44px;width:75px;text-align:center;font-size:12px;color:#1e1e1e">Export</div><div style="left:382px;top:630px;width:75px;height:24px;background:#fdfdfd;border:1px solid #adadad"></div><div class="t" style="left:382px;top:636.44px;width:75px;text-align:center;font-size:12px;color:#1e1e1e">Import</div><div style="left:1040px;top:630px;width:74px;height:24px;background:#fdfdfd;border:1px solid #adadad"></div><div class="t" style="left:1040px;top:636.44px;width:74px;text-align:center;font-size:12px;color:#1e1e1e">OK</div><div style="left:1120px;top:630px;width:75px;height:24px;background:#fdfdfd;border:1px solid #adadad"></div><div class="t" style="left:1120px;top:636.44px;width:75px;text-align:center;font-size:12px;color:#1e1e1e">Cancel</div><div style="left:779px;top:208px;width:422px;height:409px;background:#f3f3f3;border:1px solid #c8c8c8"></div><div style="left:800px;top:209px;width:378px;height:404px;background:#fff"></div><div style="left:1178px;top:212px;width:19px;height:381px;background:#fff"></div><div style="left:1178px;top:438px;width:19px;height:136px;background:#dadada"></div><svg style="left:1182px;top:215px" width="10" height="7"><path d="M0.5 5.5l4.5-4.5 4.5 4.5z" fill="#333"/></svg><svg style="left:1182px;top:581px" width="10" height="7"><path d="M0.5 0.5l4.5 4.5 4.5-4.5z" fill="#333"/></svg><svg style="left:806px;top:598px" width="6" height="10"><path d="M5 0.5v9l-4.5-4.5z" fill="#444"/></svg><svg style="left:1165px;top:598px" width="6" height="10"><path d="M1 0.5v9l4.5-4.5z" fill="#444"/></svg><div style="left:800px;top:478px;width:377px;height:14px;overflow:hidden"><svg style="left:0;top:0" width="377" height="14"><path d="M-12 14L2 0M-2 14L12 0M8 14L22 0M18 14L32 0M28 14L42 0M38 14L52 0M48 14L62 0M58 14L72 0M68 14L82 0M78 14L92 0M88 14L102 0M98 14L112 0M108 14L122 0M118 14L132 0M128 14L142 0M138 14L152 0M148 14L162 0M158 14L172 0M168 14L182 0M178 14L192 0M188 14L202 0M198 14L212 0M208 14L222 0M218 14L232 0M228 14L242 0M238 14L252 0M248 14L262 0M258 14L272 0M268 14L282 0M278 14L292 0M288 14L302 0M298 14L312 0M308 14L322 0M318 14L332 0M328 14L342 0M338 14L352 0M348 14L362 0M358 14L372 0M368 14L382 0M378 14L392 0" stroke="#c8c8c8" stroke-width="1" fill="none"/></svg></div><div style="left:800px;top:576px;width:377px;height:14px;overflow:hidden"><svg style="left:0;top:0" width="377" height="14"><path d="M-12 14L2 0M-2 14L12 0M8 14L22 0M18 14L32 0M28 14L42 0M38 14L52 0M48 14L62 0M58 14L72 0M68 14L82 0M78 14L92 0M88 14L102 0M98 14L112 0M108 14L122 0M118 14L132 0M128 14L142 0M138 14L152 0M148 14L162 0M158 14L172 0M168 14L182 0M178 14L192 0M188 14L202 0M198 14L212 0M208 14L222 0M218 14L232 0M228 14L242 0M238 14L252 0M248 14L262 0M258 14L272 0M268 14L282 0M278 14L292 0M288 14L302 0M298 14L312 0M308 14L322 0M318 14L332 0M328 14L342 0M338 14L352 0M348 14L362 0M358 14L372 0M368 14L382 0M378 14L392 0" stroke="#c8c8c8" stroke-width="1" fill="none"/></svg></div><div style="left:800px;top:212px;width:377px;height:14px;border:1px solid #a8d4e6"></div><div class="t" style="left:780px;top:213.46px;font-size:11.67px;line-height:14px;font-family:'Liberation Mono', monospace;color:#000;width:17px;text-align:right;letter-spacing:0"> 1</div><div class="t" style="left:801px;top:213.46px;font-size:11.67px;line-height:14px;font-family:'Liberation Mono', monospace;color:#0000ff">CREATE PROCEDURE</div><div class="t" style="left:920px;top:213.46px;font-size:11.67px;line-height:14px;font-family:'Liberation Mono', monospace;color:#000">spInsertOrUpdateProduct</div><div class="t" style="left:780px;top:227.46px;font-size:11.67px;line-height:14px;font-family:'Liberation Mono', monospace;color:#000;width:17px;text-align:right;letter-spacing:0"> 2</div><div class="t" style="left:780px;top:241.46px;font-size:11.67px;line-height:14px;font-family:'Liberation Mono', monospace;color:#000;width:17px;text-align:right;letter-spacing:0"> 3</div><div class="t" style="left:801px;top:241.46px;font-size:11.67px;line-height:14px;font-family:'Liberation Mono', monospace;color:#008000">-- Input parameters --</div><div class="t" style="left:780px;top:255.46px;font-size:11.67px;line-height:14px;font-family:'Liberation Mono', monospace;color:#000;width:17px;text-align:right;letter-spacing:0"> 4</div><div class="t" style="left:780px;top:269.46px;font-size:11.67px;line-height:14px;font-family:'Liberation Mono', monospace;color:#000;width:17px;text-align:right;letter-spacing:0"> 5</div><div style="left:906px;top:269px;width:7px;height:13px;background:#ffe2e2;border:1px solid #f03333;border-radius:2px"></div><div style="left:920px;top:269px;width:14px;height:13px;background:#ffe2e2;border:1px solid #f03333;border-radius:2px"></div><div style="left:941px;top:269px;width:21px;height:13px;background:#ffe2e2;border:1px solid #f03333;border-radius:2px"></div><div class="t" style="left:801px;top:269.46px;font-size:11.67px;line-height:14px;font-family:'Liberation Mono', monospace;color:#800080">@ProductNumber</div><div class="t" style="left:906px;top:269.46px;font-size:11.67px;line-height:14px;font-family:'Liberation Mono', monospace;color:#2b8aa8">NVARCHAR</div><div class="t" style="left:962px;top:269.46px;font-size:11.67px;line-height:14px;font-family:'Liberation Mono', monospace;color:#e0a020">(25),</div><div class="t" style="left:780px;top:283.46px;font-size:11.67px;line-height:14px;font-family:'Liberation Mono', monospace;color:#000;width:17px;text-align:right;letter-spacing:0"> 6</div><div style="left:878px;top:283px;width:28px;height:13px;background:#ffe2e2;border:1px solid #f03333;border-radius:2px"></div><div style="left:913px;top:283px;width:28px;height:13px;background:#ffe2e2;border:1px solid #f03333;border-radius:2px"></div><div class="t" style="left:801px;top:283.46px;font-size:11.67px;line-height:14px;font-family:'Liberation Mono', monospace;color:#800080">@ListPrice</div><div class="t" style="left:906px;top:283.46px;font-size:11.67px;line-height:14px;font-family:'Liberation Mono', monospace;color:#2b8aa8">MONEY</div><div class="t" style="left:780px;top:297.46px;font-size:11.67px;line-height:14px;font-family:'Liberation Mono', monospace;color:#000;width:17px;text-align:right;letter-spacing:0"> 7</div><div class="t" style="left:801px;top:297.46px;font-size:11.67px;line-height:14px;font-family:'Liberation Mono', monospace;color:#0000ff">AS</div><div class="t" style="left:780px;top:311.46px;font-size:11.67px;line-height:14px;font-family:'Liberation Mono', monospace;color:#000;width:17px;text-align:right;letter-spacing:0"> 8</div><div style="left:801px;top:311px;width:35px;height:13px;background:#ffe2e2;border:1px solid #f03333;border-radius:2px"></div><div class="t" style="left:836px;top:311.46px;font-size:11.67px;line-height:14px;font-family:'Liberation Mono', monospace;color:#0000ff">IF EXISTS</div><div class="t" style="left:780px;top:325.46px;font-size:11.67px;line-height:14px;font-family:'Liberation Mono', monospace;color:#000;width:17px;text-align:right;letter-spacing:0"> 9</div><div style="left:801px;top:325px;width:35px;height:13px;background:#ffe2e2;border:1px solid #f03333;border-radius:2px"></div><div class="t" style="left:836px;top:325.46px;font-size:11.67px;line-height:14px;font-family:'Liberation Mono', monospace;color:#e0a020">(</div><div class="t" style="left:780px;top:339.46px;font-size:11.67px;line-height:14px;font-family:'Liberation Mono', monospace;color:#000;width:17px;text-align:right;letter-spacing:0">10</div><div style="left:801px;top:339px;width:63px;height:13px;background:#ffe2e2;border:1px solid #f03333;border-radius:2px"></div><div style="left:837px;top:338px;width:1px;height:14px;border-left:1px dotted #000"></div><div class="t" style="left:864px;top:339.46px;font-size:11.67px;line-height:14px;font-family:'Liberation Mono', monospace;color:#0000ff">SELECT</div><div class="t" style="left:913px;top:339.46px;font-size:11.67px;line-height:14px;font-family:'Liberation Mono', monospace;color:#e0a020">*</div><div class="t" style="left:780px;top:353.46px;font-size:11.67px;line-height:14px;font-family:'Liberation Mono', monospace;color:#000;width:17px;text-align:right;letter-spacing:0">11</div><div style="left:801px;top:353px;width:56px;height:13px;background:#ffe2e2;border:1px solid #f03333;border-radius:2px"></div><div style="left:837px;top:352px;width:1px;height:14px;border-left:1px dotted #000"></div><div class="t" style="left:864px;top:353.46px;font-size:11.67px;line-height:14px;font-family:'Liberation Mono', monospace;color:#0000ff">FROM</div><div class="t" style="left:899px;top:353.46px;font-size:11.67px;line-height:14px;font-family:'Liberation Mono', monospace;color:#000">Production.Product</div><div class="t" style="left:780px;top:367.46px;font-size:11.67px;line-height:14px;font-family:'Liberation Mono', monospace;color:#000;width:17px;text-align:right;letter-spacing:0">12</div><div style="left:801px;top:367px;width:56px;height:13px;background:#ffe2e2;border:1px solid #f03333;border-radius:2px"></div><div style="left:997px;top:367px;width:7px;height:13px;background:#ffe2e2;border:1px solid #f03333;border-radius:2px"></div><div style="left:1011px;top:367px;width:7px;height:13px;background:#ffe2e2;border:1px solid #f03333;border-radius:2px"></div><div style="left:837px;top:366px;width:1px;height:14px;border-left:1px dotted #000"></div><div class="t" style="left:864px;top:367.46px;font-size:11.67px;line-height:14px;font-family:'Liberation Mono', monospace;color:#0000ff">WHERE</div><div class="t" style="left:906px;top:367.46px;font-size:11.67px;line-height:14px;font-family:'Liberation Mono', monospace;color:#000">ProductNumber</div><div class="t" style="left:1004px;top:367.46px;font-size:11.67px;line-height:14px;font-family:'Liberation Mono', monospace;color:#e0a020">=</div><div class="t" style="left:1018px;top:367.46px;font-size:11.67px;line-height:14px;font-family:'Liberation Mono', monospace;color:#800080">@ProductNumber</div><div class="t" style="left:780px;top:381.46px;font-size:11.67px;line-height:14px;font-family:'Liberation Mono', monospace;color:#000;width:17px;text-align:right;letter-spacing:0">13</div><div style="left:801px;top:381px;width:98px;height:13px;background:#ffe2e2;border:1px solid #f03333;border-radius:2px"></div><div style="left:997px;top:381px;width:7px;height:13px;background:#ffe2e2;border:1px solid #f03333;border-radius:2px"></div><div style="left:1011px;top:381px;width:7px;height:13px;background:#ffe2e2;border:1px solid #f03333;border-radius:2px"></div><div style="left:837px;top:380px;width:1px;height:14px;border-left:1px dotted #000"></div><div style="left:872px;top:380px;width:1px;height:14px;border-left:1px dotted #000"></div><div class="t" style="left:906px;top:381.46px;font-size:11.67px;line-height:14px;font-family:'Liberation Mono', monospace;color:#e0a020">AND</div><div class="t" style="left:934px;top:381.46px;font-size:11.67px;line-height:14px;font-family:'Liberation Mono', monospace;color:#000">ListPrice</div><div class="t" style="left:1004px;top:381.46px;font-size:11.67px;line-height:14px;font-family:'Liberation Mono', monospace;color:#e0a020">&gt;</div><div class="t" style="left:1018px;top:381.46px;font-size:11.67px;line-height:14px;font-family:'Liberation Mono', monospace;color:#e0a020">1000</div><div class="t" style="left:780px;top:395.46px;font-size:11.67px;line-height:14px;font-family:'Liberation Mono', monospace;color:#000;width:17px;text-align:right;letter-spacing:0">14</div><div style="left:801px;top:395px;width:42px;height:13px;background:#ffe2e2;border:1px solid #f03333;border-radius:2px"></div><div class="t" style="left:836px;top:395.46px;font-size:11.67px;line-height:14px;font-family:'Liberation Mono', monospace;color:#e0a020">)</div><div class="t" style="left:780px;top:409.46px;font-size:11.67px;line-height:14px;font-family:'Liberation Mono', monospace;color:#000;width:17px;text-align:right;letter-spacing:0">15</div><div style="left:801px;top:409px;width:63px;height:13px;background:#ffe2e2;border:1px solid #f03333;border-radius:2px"></div><div style="left:837px;top:408px;width:1px;height:14px;border-left:1px dotted #000"></div><div class="t" style="left:864px;top:409.46px;font-size:11.67px;line-height:14px;font-family:'Liberation Mono', monospace;color:#0000ff">UPDATE</div><div class="t" style="left:913px;top:409.46px;font-size:11.67px;line-height:14px;font-family:'Liberation Mono', monospace;color:#000">Production.Product</div><div class="t" style="left:780px;top:423.46px;font-size:11.67px;line-height:14px;font-family:'Liberation Mono', monospace;color:#000;width:17px;text-align:right;letter-spacing:0">16</div><div style="left:801px;top:423px;width:70px;height:13px;background:#ffe2e2;border:1px solid #f03333;border-radius:2px"></div><div style="left:837px;top:422px;width:1px;height:14px;border-left:1px dotted #000"></div><div style="left:872px;top:422px;width:1px;height:14px;border-left:1px dotted #000"></div><div class="t" style="left:878px;top:423.46px;font-size:11.67px;line-height:14px;font-family:'Liberation Mono', monospace;color:#0000ff">SET</div><div class="t" style="left:780px;top:437.46px;font-size:11.67px;line-height:14px;font-family:'Liberation Mono', monospace;color:#000;width:17px;text-align:right;letter-spacing:0">17</div><div style="left:801px;top:437px;width:98px;height:13px;background:#ffe2e2;border:1px solid #f03333;border-radius:2px"></div><div style="left:969px;top:437px;width:7px;height:13px;background:#ffe2e2;border:1px solid #f03333;border-radius:2px"></div><div style="left:983px;top:437px;width:7px;height:13px;background:#ffe2e2;border:1px solid #f03333;border-radius:2px"></div><div style="left:1060px;top:437px;width:7px;height:13px;background:#ffe2e2;border:1px solid #f03333;border-radius:2px"></div><div style="left:1074px;top:437px;width:7px;height:13px;background:#ffe2e2;border:1px solid #f03333;border-radius:2px"></div><div style="left:837px;top:436px;width:1px;height:14px;border-left:1px dotted #000"></div><div style="left:872px;top:436px;width:1px;height:14px;border-left:1px dotted #000"></div><div class="t" style="left:906px;top:437.46px;font-size:11.67px;line-height:14px;font-family:'Liberation Mono', monospace;color:#000">ListPrice</div><div class="t" style="left:976px;top:437.46px;font-size:11.67px;line-height:14px;font-family:'Liberation Mono', monospace;color:#e0a020">=</div><div class="t" style="left:990px;top:437.46px;font-size:11.67px;line-height:14px;font-family:'Liberation Mono', monospace;color:#e0a020">(</div><div class="t" style="left:997px;top:437.46px;font-size:11.67px;line-height:14px;font-family:'Liberation Mono', monospace;color:#000">ListPrice</div><div class="t" style="left:1067px;top:437.46px;font-size:11.67px;line-height:14px;font-family:'Liberation Mono', monospace;color:#e0a020">-</div><div class="t" style="left:1081px;top:437.46px;font-size:11.67px;line-height:14px;font-family:'Liberation Mono', monospace;color:#e0a020">100)</div><div class="t" style="left:780px;top:451.46px;font-size:11.67px;line-height:14px;font-family:'Liberation Mono', monospace;color:#000;width:17px;text-align:right;letter-spacing:0">18</div><div style="left:801px;top:451px;width:56px;height:13px;background:#ffe2e2;border:1px solid #f03333;border-radius:2px"></div><div style="left:997px;top:451px;width:7px;height:13px;background:#ffe2e2;border:1px solid #f03333;border-radius:2px"></div><div style="left:1011px;top:451px;width:7px;height:13px;background:#ffe2e2;border:1px solid #f03333;border-radius:2px"></div><div style="left:1116px;top:451px;width:7px;height:13px;background:#ffe2e2;border:1px solid #f03333;border-radius:2px"></div><div style="left:837px;top:450px;width:1px;height:14px;border-left:1px dotted #000"></div><div class="t" style="left:864px;top:451.46px;font-size:11.67px;line-height:14px;font-family:'Liberation Mono', monospace;color:#0000ff">WHERE</div><div class="t" style="left:906px;top:451.46px;font-size:11.67px;line-height:14px;font-family:'Liberation Mono', monospace;color:#000">ProductNumber</div><div class="t" style="left:1004px;top:451.46px;font-size:11.67px;line-height:14px;font-family:'Liberation Mono', monospace;color:#e0a020">=</div><div class="t" style="left:1018px;top:451.46px;font-size:11.67px;line-height:14px;font-family:'Liberation Mono', monospace;color:#800080">@ProductNumber</div><div class="t" style="left:1116px;top:451.46px;font-size:11.67px;line-height:14px;font-family:'Liberation Mono', monospace;color:#e0a020">;</div><div class="t" style="left:780px;top:465.46px;font-size:11.67px;line-height:14px;font-family:'Liberation Mono', monospace;color:#000;width:17px;text-align:right;letter-spacing:0">19</div><div style="left:801px;top:465px;width:35px;height:13px;background:#ffe2e2;border:1px solid #f03333;border-radius:2px"></div><div class="t" style="left:836px;top:465.46px;font-size:11.67px;line-height:14px;font-family:'Liberation Mono', monospace;color:#0000ff">ELSE</div><div class="t" style="left:780px;top:493.46px;font-size:11.67px;line-height:14px;font-family:'Liberation Mono', monospace;color:#000;width:17px;text-align:right;letter-spacing:0">20</div><div style="left:801px;top:493px;width:35px;height:13px;background:#f6e4e4;border:1px solid #f03333;border-radius:2px"></div><div class="t" style="left:836px;top:493.46px;font-size:11.67px;line-height:14px;font-family:'Liberation Mono', monospace;color:#0000ff">INSERT INTO</div><div class="t" style="left:920px;top:493.46px;font-size:11.67px;line-height:14px;font-family:'Liberation Mono', monospace;color:#000">Production.Product</div><div class="t" style="left:780px;top:507.46px;font-size:11.67px;line-height:14px;font-family:'Liberation Mono', monospace;color:#000;width:17px;text-align:right;letter-spacing:0">21</div><div style="left:801px;top:507px;width:35px;height:13px;background:#f6e4e4;border:1px solid #f03333;border-radius:2px"></div><div class="t" style="left:836px;top:507.46px;font-size:11.67px;line-height:14px;font-family:'Liberation Mono', monospace;color:#e0a020">(</div><div class="t" style="left:843px;top:507.46px;font-size:11.67px;line-height:14px;font-family:'Liberation Mono', monospace;color:#000">ProductNumber</div><div class="t" style="left:934px;top:507.46px;font-size:11.67px;line-height:14px;font-family:'Liberation Mono', monospace;color:#e0a020">,</div><div class="t" style="left:780px;top:521.46px;font-size:11.67px;line-height:14px;font-family:'Liberation Mono', monospace;color:#000;width:17px;text-align:right;letter-spacing:0">22</div><div style="left:801px;top:521px;width:42px;height:13px;background:#ffe2e2;border:1px solid #f03333;border-radius:2px"></div><div style="left:837px;top:520px;width:1px;height:14px;border-left:1px dotted #000"></div><div class="t" style="left:843px;top:521.46px;font-size:11.67px;line-height:14px;font-family:'Liberation Mono', monospace;color:#000">ListPrice</div><div class="t" style="left:780px;top:535.46px;font-size:11.67px;line-height:14px;font-family:'Liberation Mono', monospace;color:#000;width:17px;text-align:right;letter-spacing:0">23</div><div style="left:801px;top:535px;width:35px;height:13px;background:#ffe2e2;border:1px solid #f03333;border-radius:2px"></div><div class="t" style="left:836px;top:535.46px;font-size:11.67px;line-height:14px;font-family:'Liberation Mono', monospace;color:#e0a020">)</div><div class="t" style="left:780px;top:549.46px;font-size:11.67px;line-height:14px;font-family:'Liberation Mono', monospace;color:#000;width:17px;text-align:right;letter-spacing:0">24</div><div style="left:801px;top:549px;width:35px;height:13px;background:#ffe2e2;border:1px solid #f03333;border-radius:2px"></div><div style="left:837px;top:548px;width:1px;height:14px;border-left:1px dotted #000"></div><div style="left:872px;top:548px;width:1px;height:14px;border-left:1px dotted #000"></div><div class="t" style="left:885px;top:549.46px;font-size:11.67px;line-height:14px;font-family:'Liberation Mono', monospace;color:#0000ff">SELECT</div><div class="t" style="left:934px;top:549.46px;font-size:11.67px;line-height:14px;font-family:'Liberation Mono', monospace;color:#800080">@ProductNumber</div><div class="t" style="left:1032px;top:549.46px;font-size:11.67px;line-height:14px;font-family:'Liberation Mono', monospace;color:#e0a020">,</div><div class="t" style="left:780px;top:563.46px;font-size:11.67px;line-height:14px;font-family:'Liberation Mono', monospace;color:#000;width:17px;text-align:right;letter-spacing:0">25</div><div style="left:801px;top:563px;width:133px;height:13px;background:#ffe2e2;border:1px solid #f03333;border-radius:2px"></div><div style="left:1004px;top:563px;width:7px;height:13px;background:#ffe2e2;border:1px solid #f03333;border-radius:2px"></div><div style="left:837px;top:562px;width:1px;height:14px;border-left:1px dotted #000"></div><div style="left:872px;top:562px;width:1px;height:14px;border-left:1px dotted #000"></div><div style="left:907px;top:562px;width:1px;height:14px;border-left:1px dotted #000"></div><div class="t" style="left:934px;top:563.46px;font-size:11.67px;line-height:14px;font-family:'Liberation Mono', monospace;color:#800080">@ListPrice</div><div class="t" style="left:1004px;top:563.46px;font-size:11.67px;line-height:14px;font-family:'Liberation Mono', monospace;color:#e0a020">;</div><div class="t" style="left:780px;top:591.46px;font-size:11.67px;line-height:14px;font-family:'Liberation Mono', monospace;color:#000;width:17px;text-align:right;letter-spacing:0">26</div></body></html>
